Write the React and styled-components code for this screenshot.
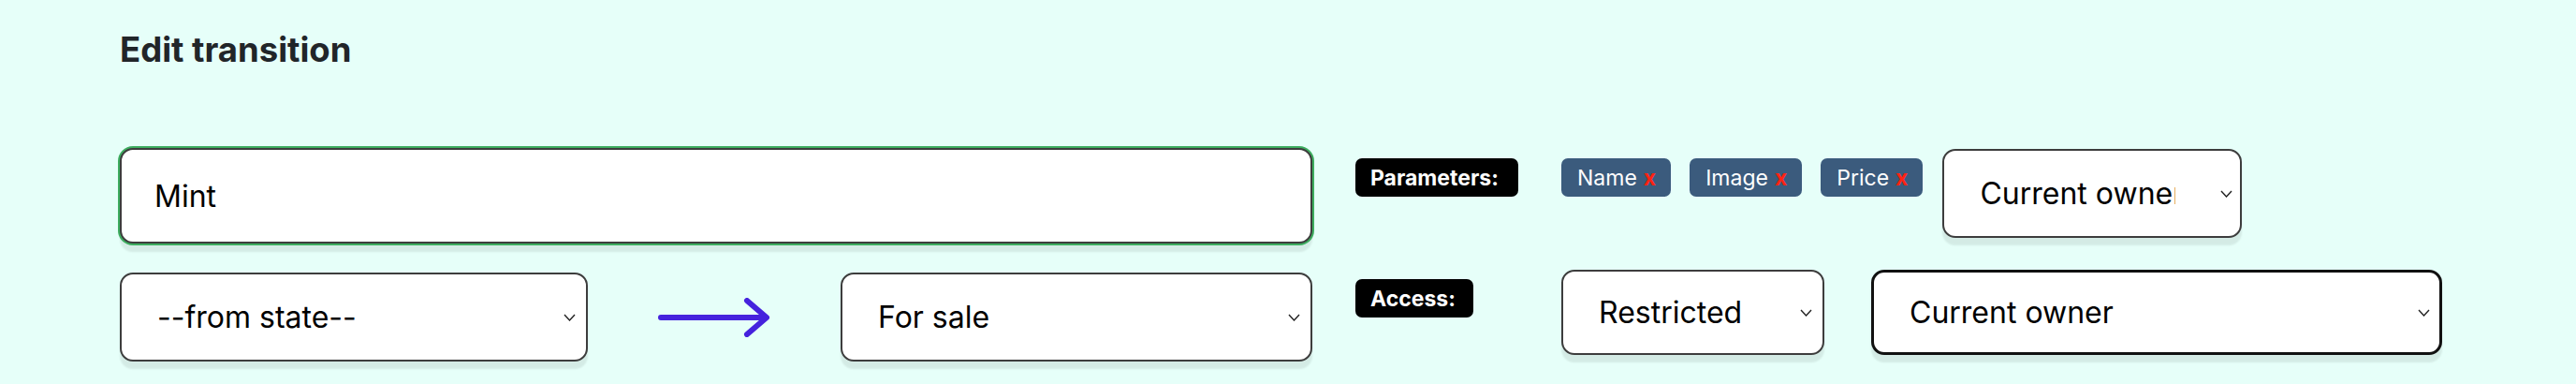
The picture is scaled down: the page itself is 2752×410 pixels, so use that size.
import React from 'react';
import styled, { createGlobalStyle, css } from 'styled-components';

const GlobalStyle = createGlobalStyle`
  html, body {
    margin: 0;
    padding: 0;
    background: #e6fff9;
    font-family: Inter, "Noto Sans", sans-serif;
  }
`;

const Page = styled.div`
  padding: 31px 0 0 128px;
  width: 2752px;
  height: 410px;
  box-sizing: border-box;
  background: #e6fff9;
`;

const Title = styled.h2`
  margin: 0 0 83px;
  font-size: 36.5px;
  line-height: 44px;
  font-weight: 700;
  color: #212529;
`;

const Body = styled.div`
  display: flex;
  gap: 46px;
`;

const Column = styled.div`
  display: flex;
  flex-direction: column;
  gap: ${(p) => p.gap}px;
  width: ${(p) => (p.width ? `${p.width}px` : 'auto')};
  padding-top: ${(p) => p.offset || 0}px;
`;

const field = css`
  box-sizing: border-box;
  font-family: Inter, "Noto Sans", sans-serif;
  font-size: 32px;
  color: #000;
  background: #fff;
  border: 2px solid #3d3d3d;
  border-radius: 14px;
  box-shadow: 0 8px 2px rgba(0, 0, 0, 0.08);
  outline: none;
`;

const NameInput = styled.input`
  ${field}
  width: 100%;
  height: 102px;
  padding: 0 35px;
  box-shadow: 0 0 0 2px #3dad5f, 0 9px 2px rgba(0, 0, 0, 0.08);
`;

const SelectBox = styled.div`
  position: relative;
  flex: none;
  width: ${(p) => p.width}px;
  height: ${(p) => p.height || 93}px;
  margin-left: ${(p) => p.gapLeft || 0}px;
`;

const NativeSelect = styled.select`
  ${field}
  appearance: none;
  width: 100%;
  height: 100%;
  padding: 0 ${(p) => (p.narrow ? 69 : 50)}px 0 38px;
  ${(p) =>
    p.active &&
    css`
      border: 3px solid #111;
    `}
`;

const Chevron = styled.svg`
  position: absolute;
  right: ${(p) => p.right}px;
  top: 50%;
  width: 13px;
  height: 8px;
  margin-top: -4px;
  pointer-events: none;
`;

function Select({ width, height, gapLeft, active, narrow, value, label }) {
  return (
    <SelectBox width={width} height={height} gapLeft={gapLeft}>
      <NativeSelect active={active} narrow={narrow} defaultValue={value}>
        <option value={value}>{label}</option>
      </NativeSelect>
      <Chevron viewBox="0 0 13 8" right={narrow ? 10 : 13}>
        <path d="M1 1 L6.5 7 L12 1" fill="none" stroke="#222" strokeWidth="1.4" />
      </Chevron>
    </SelectBox>
  );
}

const StateRow = styled.div`
  display: flex;
  align-items: center;
  justify-content: space-between;
`;

const Arrow = styled.svg`
  width: 120px;
  height: 42px;
  display: block;
`;

const Row = styled.div`
  display: flex;
  align-items: flex-start;
`;

const Badge = styled.span`
  box-sizing: border-box;
  display: inline-flex;
  align-items: center;
  width: ${(p) => p.width}px;
  height: 41px;
  margin: 10px ${(p) => 220 - p.width}px 0 0;
  padding: 0 16px;
  background: #000;
  color: #fff;
  border-radius: 7px;
  font-size: 23px;
  font-weight: 700;
`;

const Chips = styled.div`
  display: flex;
  gap: 20px;
  margin-top: 10px;
`;

const Chip = styled.span`
  box-sizing: border-box;
  display: inline-flex;
  align-items: center;
  height: 41px;
  padding: 0 16px 0 17px;
  background: #3b5b7d;
  color: #fff;
  border-radius: 7px;
  font-size: 23px;
`;

const Remove = styled.b`
  margin-left: 7px;
  color: #ff2312;
  font-weight: 700;
`;

export default function App() {
  return (
    <Page>
      <GlobalStyle />
      <Title>Edit transition</Title>
      <Body>
        <Column width={1274} gap={31}>
          <NameInput defaultValue="Mint" />
          <StateRow>
            <Select width={500} height={95} value="" label="--from state--" />
            <Arrow viewBox="0 0 120 42">
              <path
                d="M3 21 H115 M95 3 L116 21 L95 39"
                fill="none"
                stroke="#4522dd"
                strokeWidth="6"
                strokeLinecap="round"
                strokeLinejoin="round"
              />
            </Arrow>
            <Select width={504} height={95} value="sale" label="For sale" />
          </StateRow>
        </Column>
        <Column gap={34} offset={1}>
          <Row>
            <Badge width={174}>Parameters:</Badge>
            <Chips>
              <Chip>
                Name<Remove>x</Remove>
              </Chip>
              <Chip>
                Image<Remove>x</Remove>
              </Chip>
              <Chip>
                Price<Remove>x</Remove>
              </Chip>
            </Chips>
            <Select width={320} height={95} gapLeft={21} narrow value="owner" label="Current owner" />
          </Row>
          <Row>
            <Badge width={126}>Access:</Badge>
            <Select width={281} height={91} value="restricted" label="Restricted" />
            <Select width={610} height={91} gapLeft={50} active value="owner" label="Current owner" />
          </Row>
        </Column>
      </Body>
    </Page>
  );
}
